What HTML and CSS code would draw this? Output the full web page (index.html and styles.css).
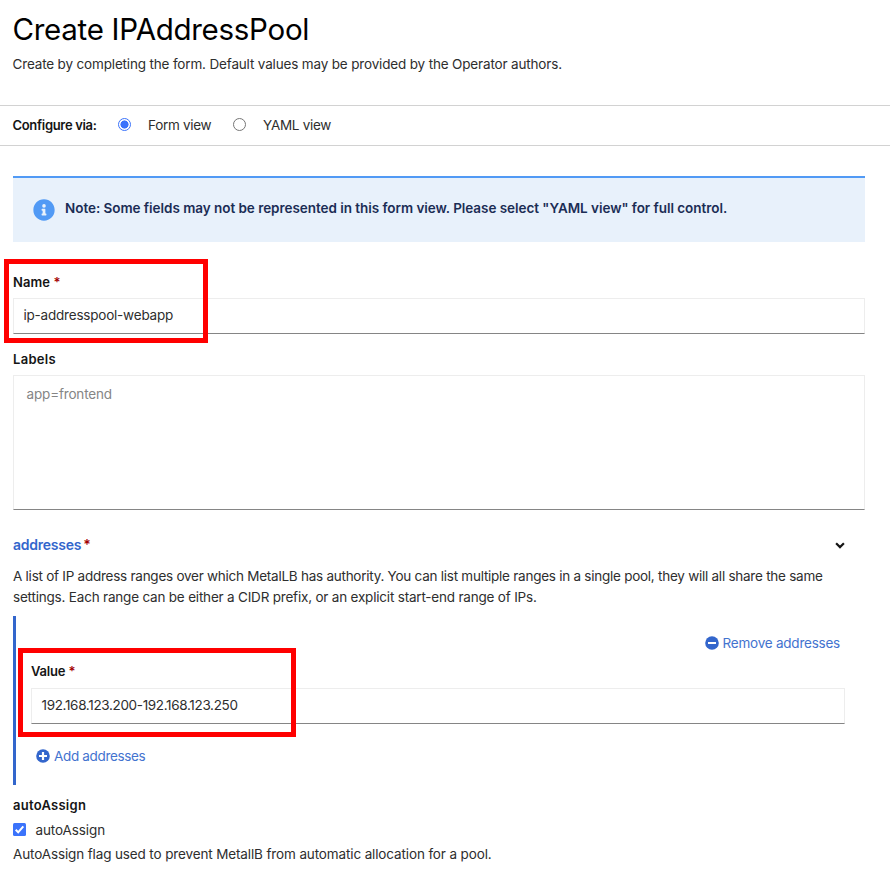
FILE: index.html
```html
<!DOCTYPE html>
<html lang="en">
<head>
<meta charset="utf-8">
<title>Create IPAddressPool</title>
<link rel="stylesheet" href="styles.css">
</head>
<body>
<header class="page-header">
  <h1 class="title"><span class="t-title">Create IPAddressPool</span></h1>
  <p class="subtitle"><span class="t-sub">Create by completing the form. Default values may be provided by the Operator authors.</span></p>
</header>
<div class="switcher">
  <span class="switcher-label t-conf">Configure via:</span>
  <label class="option option-form"><span class="radio radio-on"></span><span class="t-form">Form view</span></label>
  <label class="option option-yaml"><span class="radio"></span><span class="t-yaml">YAML view</span></label>
</div>
<main class="form">
  <div class="alert">
    <svg class="alert-icon" viewBox="0 0 512 512"><path fill="#519af5" d="M256 8C119 8 8 119 8 256s111 248 248 248 248-111 248-248S393 8 256 8zm0 110a42 42 0 1 1 0 84 42 42 0 0 1 0-84zm56 254c0 6.600-5.400 12-12 12h-88c-6.600 0-12-5.400-12-12v-24c0-6.600 5.400-12 12-12h12v-64h-12c-6.600 0-12-5.400-12-12v-24c0-6.600 5.400-12 12-12h64c6.600 0 12 5.400 12 12v100h12c6.600 0 12 5.400 12 12z"/></svg>
    <span class="alert-text t-note">Note: Some fields may not be represented in this form view. Please select "YAML view" for full control.</span>
  </div>
  <section class="field name-field">
    <div class="label"><span class="t-name">Name</span> <span class="required">*</span></div>
    <div class="input"><span class="t-pool">ip-addresspool-webapp</span></div>
    <div class="highlight highlight-name"></div>
  </section>
  <section class="field labels-field">
    <div class="label"><span class="t-labels">Labels</span></div>
    <div class="input tags"><span class="t-app">app=frontend</span></div>
  </section>
  <section class="group">
    <div class="group-head">
      <div class="label group-title"><span class="t-addr">addresses</span><span class="required">*</span></div>
      <svg class="chevron" viewBox="0 0 10 7"><path d="M1.100 1.300 5 5.100l3.900-3.800" fill="none" stroke="#151515" stroke-width="2.200"/></svg>
    </div>
    <p class="description"><span class="t-d1">A list of IP address ranges over which MetalLB has authority. You can list multiple ranges in a single pool, they will all share the same</span><br><span class="t-d2">settings. Each range can be either a CIDR prefix, or an explicit start-end range of IPs.</span></p>
    <div class="group-body">
      <div class="link remove"><svg class="link-icon" viewBox="0 0 14 14"><circle cx="7" cy="7" r="6.800" fill="#36c"/><path d="M3 7h8" stroke="#fff" stroke-width="2"/></svg><span class="t-rem">Remove addresses</span></div>
      <div class="field value-field">
        <div class="label"><span class="t-value">Value</span> <span class="required">*</span></div>
        <div class="input"><span class="t-ip">192.168.123.200-192.168.123.250</span></div>
        <div class="highlight highlight-value"></div>
      </div>
      <div class="link add"><svg class="link-icon" viewBox="0 0 14 14"><circle cx="7" cy="7" r="6.800" fill="#36c"/><path d="M3 7h8M7 3v8" stroke="#fff" stroke-width="2.200"/></svg><span class="t-add">Add addresses</span></div>
    </div>
  </section>
  <section class="auto">
    <div class="label"><span class="t-aa">autoAssign</span></div>
    <label class="check-row"><svg class="checkbox" viewBox="0 0 13 13"><rect width="13" height="13" rx="1.500" fill="#3b73fb"/><path d="M2.700 6.800 5.200 9.300 10.300 3.400" fill="none" stroke="#fff" stroke-width="2"/></svg><span class="t-aa2">autoAssign</span></label>
    <p class="auto-help"><span class="t-help">AutoAssign flag used to prevent MetallB from automatic allocation for a pool.</span></p>
  </section>
</main>
</body>
</html>
```
FILE: styles.css
```css
* { box-sizing: border-box; }
body { margin: 0; height: 871px; overflow: hidden; background: #fff; color: #2e2e2e; font: 400 13.5px/21px Inter, "Liberation Sans", sans-serif; white-space: nowrap; }
h1, p { margin: 0; }
.page-header { height: 105px; padding: 8px 0 0 12.5px; }
.title { font-size: 29.5px; font-weight: 400; line-height: 42px; color: #000; }
.subtitle { margin-top: 4px; }
.switcher { display: flex; height: 41px; border: solid #d2d2d2; border-width: 1px 0; padding: 0 0 1px 12.5px; align-items: center; }
.switcher-label { width: 105.5px; font-size: 13px; font-weight: 600; color: #151515; }
.option { display: flex; align-items: center; gap: 17px; width: 115px; }
.radio { width: 13px; height: 13px; flex: none; border: 1px solid #767676; border-radius: 50%; margin-top: -2px; }
.radio-on { border-color: #3b73fb; background: radial-gradient(circle, #3b73fb 3.800px, #fff 4.300px); }
.form { padding: 30px 25px 0 13px; }
.alert { display: flex; height: 66px; border-top: 2px solid #519af5; background: #e8f1fb; padding: 20px 0 0 20px; gap: 10px; }
.alert-icon { width: 22px; height: 22px; margin-top: 1px; }
.alert-text { font-weight: 600; color: #1b2d55; }
.field { position: relative; }
.label { font-weight: 600; font-size: 13px; color: #151515; }
.required { color: #a30000; font-weight: 600; }
.name-field { margin-top: 30px; }
.input { height: 36px; border: 1px solid #ededed; border-bottom-color: #858585; padding: 6px 9.5px; }
.field .label { margin-bottom: 5px; }
.labels-field { margin-top: 15px; }
.tags { height: 135px; padding: 8px 12.5px; color: #858585; }
.highlight { position: absolute; border: 5px solid #f00; }
.highlight-name { left: -9px; top: -13px; width: 204px; height: 84px; }
.highlight-value { left: -13px; top: -13px; width: 278px; height: 89px; }
.group { margin-top: 24px; }
.group-head { display: flex; justify-content: space-between; align-items: center; padding-right: 20.5px; }
.group-title { display: flex; gap: 2px; color: #36c; font-size: 14px; }
.chevron { width: 10px; height: 7px; margin-top: 2px; }
.description { margin-top: 11px; }
.group-body { height: 169px; margin-top: 8px; border-left: 3px solid #36c; padding: 17px 20px 0 15px; }
.link { display: flex; align-items: center; gap: 4px; color: #4373cf; }
.link-icon { width: 14px; height: 14px; margin-top: -1px; }
.remove { justify-content: flex-end; padding-right: 5px; }
.value-field { margin-top: 7px; }
.value-field .label { margin-bottom: 6px; }
.add { margin: 22px 0 0 5px; }
.auto { margin-top: 10px; }
.check-row { display: flex; align-items: center; gap: 9.5px; margin-top: 4px; }
.checkbox { width: 13px; height: 13px; margin-top: -3px; }
.auto-help { margin-top: 3px; }

/* Per-label tracking */
.t-title { letter-spacing: -.28px; }
.t-sub { letter-spacing: -.162px; }
.t-conf { letter-spacing: -.32px; }
.t-form { letter-spacing: -.3px; }
.t-yaml { letter-spacing: -.28px; }
.t-note { letter-spacing: -.045px; }
.t-pool { letter-spacing: -.21px; }
.t-labels { letter-spacing: .3px; }
.t-name { letter-spacing: .1px; }
.t-app { letter-spacing: -.16px; }
.t-addr { letter-spacing: -.25px; }
.t-d1 { letter-spacing: -.254px; }
.t-d2 { letter-spacing: -.2px; }
.t-rem { letter-spacing: -.23px; }
.t-value { letter-spacing: -.2px; }
.t-ip { letter-spacing: -.34px; }
.t-add { letter-spacing: -.34px; }
.t-aa { letter-spacing: .26px; }
.t-aa2 { letter-spacing: -.1px; }
.t-help { letter-spacing: -.13px; }
```
